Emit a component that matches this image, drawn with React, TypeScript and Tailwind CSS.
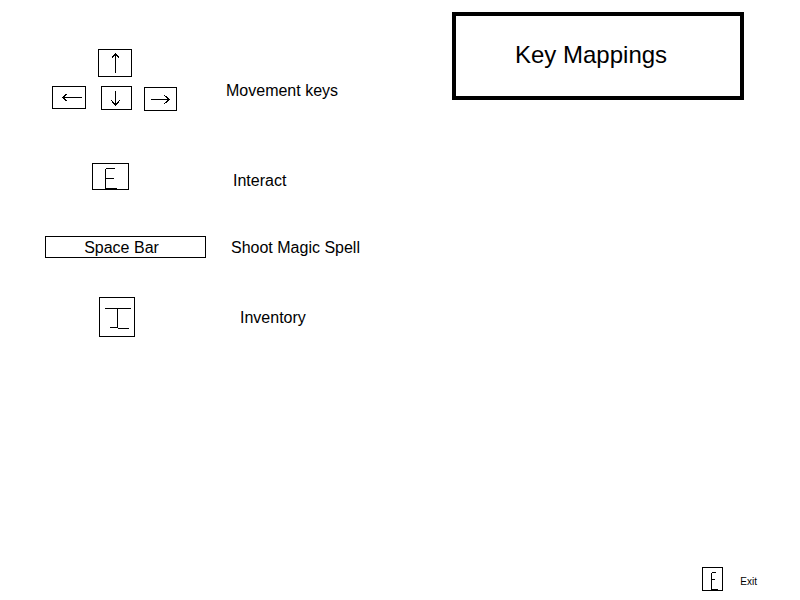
import type { ReactNode } from "react";

type Seg = [number, number, number, number];

// key cap with a hand drawn glyph, coordinates in the cap's own pixels
function KeyCap({
  w,
  h,
  lines,
  className = "",
  children,
}: {
  w: number;
  h: number;
  lines?: Seg[];
  className?: string;
  children?: ReactNode;
}) {
  return (
    <div
      className={`relative box-border flex shrink-0 items-center justify-center border border-black ${className}`}
    >
      {lines && (
        <svg
          width={w}
          height={h}
          viewBox={`0 0 ${w} ${h}`}
          className="absolute left-[-1px] top-[-1px]"
          shapeRendering="crispEdges"
        >
          {lines.map(([x1, y1, x2, y2], i) => (
            <line
              key={i}
              x1={x1 + 0.5}
              y1={y1 + 0.5}
              x2={x2 + 0.5}
              y2={y2 + 0.5}
              stroke="#000"
              strokeWidth={1}
            />
          ))}
        </svg>
      )}
      {children}
    </div>
  );
}

const upArrow: Seg[] = [
  [17, 4, 17, 23],
  [13, 9, 17, 4],
  [17, 4, 21, 9],
];
const leftArrow: Seg[] = [
  [10, 11, 29, 11],
  [15, 7, 10, 11],
  [10, 11, 15, 15],
];
const downArrow: Seg[] = [
  [14, 4, 14, 19],
  [10, 14, 14, 19],
  [14, 19, 18, 14],
];
const rightArrow: Seg[] = [
  [6, 12, 25, 12],
  [20, 8, 25, 12],
  [25, 12, 20, 16],
];
const letterE: Seg[] = [
  [13, 5, 13, 25],
  [13, 5, 22, 5],
  [13, 15, 21, 15],
  [13, 25, 24, 25],
];
const letterI: Seg[] = [
  [5, 11, 31, 11],
  [18, 11, 18, 30],
  [10, 30, 18, 30],
  [18, 31, 29, 31],
];
const smallE: Seg[] = [
  [9, 5, 9, 22],
  [9, 5, 13, 5],
  [9, 12, 12, 12],
  [9, 22, 15, 22],
];

export default function App() {
  return (
    <div className="flex h-[600px] w-[800px] flex-col bg-white font-['Liberation_Sans',Arial,sans-serif] text-black">
      <div className="flex">
        <div className="flex flex-col pl-[45px] pt-[49px]">
          {/* movement */}
          <div className="flex items-start">
            <div className="ml-[7px] flex flex-col">
              <KeyCap w={34} h={28} lines={upArrow} className="ml-[46px] h-[28px] w-[34px]" />
              <div className="mt-[9px] flex items-start">
                <KeyCap w={34} h={23} lines={leftArrow} className="h-[23px] w-[34px]" />
                <KeyCap w={31} h={24} lines={downArrow} className="ml-[15px] h-[24px] w-[31px]" />
                <KeyCap w={33} h={24} lines={rightArrow} className="ml-[12px] mt-[1px] h-[24px] w-[33px]" />
              </div>
            </div>
            <p className="ml-[49px] mt-[33px] text-[16px] leading-[18px]">Movement keys</p>
          </div>

          {/* interact */}
          <div className="mt-[52px] flex items-start">
            <KeyCap w={37} h={27} lines={letterE} className="ml-[47px] h-[27px] w-[37px]" />
            <p className="ml-[104px] mt-[9px] text-[16px] leading-[18px]">Interact</p>
          </div>

          {/* spell */}
          <div className="mt-[46px] flex items-center">
            <KeyCap w={161} h={22} className="h-[22px] w-[161px] pr-[8px] pt-[2px] text-[16px] leading-[18px]">
              Space Bar
            </KeyCap>
            <p className="ml-[25px] pt-[2px] text-[16px] leading-[18px]">Shoot Magic Spell</p>
          </div>

          {/* inventory */}
          <div className="mt-[39px] flex items-center">
            <KeyCap w={36} h={40} lines={letterI} className="ml-[54px] h-[40px] w-[36px]" />
            <p className="ml-[105px] pt-[2px] text-[16px] leading-[18px]">Inventory</p>
          </div>
        </div>

        <div className="ml-auto mr-[56px] mt-[12px] box-border flex h-[88px] w-[292px] items-center border-4 border-black pb-[2px] pl-[59px]">
          <h1 className="text-[24px] leading-[28px] font-normal">Key Mappings</h1>
        </div>
      </div>

      <div className="mb-[9px] mr-[43px] mt-auto flex items-center justify-end">
        <KeyCap w={21} h={24} lines={smallE} className="h-[24px] w-[21px]" />
        <span className="ml-[17px] mt-[6px] text-[10px] leading-[12px]">Exit</span>
      </div>
    </div>
  );
}
